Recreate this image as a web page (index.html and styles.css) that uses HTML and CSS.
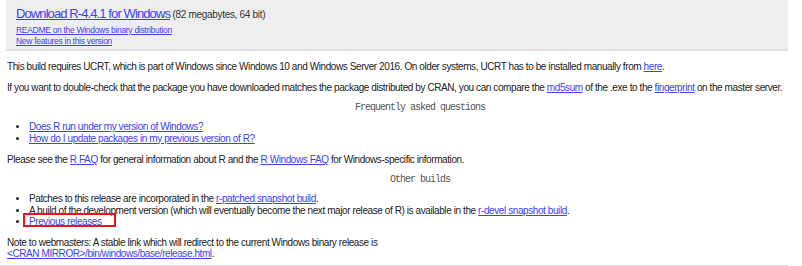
FILE: index.html
```html
<!DOCTYPE html>
<html lang="en">
<head>
    <meta charset="UTF-8">
    <meta name="viewport" content="width=device-width, initial-scale=1.0">
    <title>R-4.4.1 for Windows</title>
    <link rel="stylesheet" href="styles.css">
</head>
<body>
    <div class="page">
        <div class="download">
            <div class="download-main">
                <a class="download-link" href="#">Download R-4.4.1 for Windows</a>
                <span class="download-size">(82 megabytes, 64 bit)</span>
            </div>
            <a class="small-link" href="#">README on the Windows binary distribution</a>
            <a class="small-link" href="#">New features in this version</a>
        </div>

        <p>This build requires UCRT, which is part of Windows since Windows 10 and Windows Server 2016. On older systems, UCRT has to be installed manually from <a href="#">here</a>.</p>

        <p>If you want to double-check that the package you have downloaded matches the package distributed by CRAN, you can compare the <a href="#">md5sum</a> of the .exe to the <a href="#">fingerprint</a> on the master server.</p>

        <h2 class="section-title">Frequently asked questions</h2>

        <ul>
            <li><a href="#">Does R run under my version of Windows?</a></li>
            <li><a href="#">How do I update packages in my previous version of R?</a></li>
        </ul>

        <p>Please see the <a href="#">R FAQ</a> for general information about R and the <a href="#">R Windows FAQ</a> for Windows-specific information.</p>

        <h2 class="section-title">Other builds</h2>

        <ul>
            <li>Patches to this release are incorporated in the <a href="#">r-patched snapshot build</a>.</li>
            <li>A build of the development version (which will eventually become the next major release of R) is available in the <a href="#">r-devel snapshot build</a>.</li>
            <li class="marked"><a href="#">Previous releases</a><span class="mark-box"></span></li>
        </ul>

        <p class="note">Note to webmasters: A stable link which will redirect to the current Windows binary release is<br>
        <a href="#">&lt;CRAN MIRROR&gt;/bin/windows/base/release.html</a>.</p>

        <hr>
    </div>
</body>
</html>
```

FILE: styles.css
```css
body {
    margin: 0;
    background-color: white;
    font-family: "Liberation Sans", Arial, sans-serif;
    font-size: 10px;
    letter-spacing: -0.41px;
    line-height: 11px;
    color: #222;
}
a {
    color: #4040f0;
}
.page {
    width: 788px;
}
.download {
    margin-left: 6px;
    padding: 5px 10px 4px;
    background-color: #eeeeee;
    border-bottom: 2px solid #e2e2e2;
    height: 40px;
}
.download-main {
    line-height: 17px;
    margin-bottom: 2px;
}
.download-link {
    font-size: 13px;
    letter-spacing: -0.9px;
}
.download-size {
    color: #333;
    letter-spacing: -0.3px;
}
.small-link {
    display: block;
    font-size: 8.5px;
    letter-spacing: -0.3px;
    line-height: 11px;
}
p {
    margin: 10px 0 0 7px;
    white-space: nowrap;
}
.section-title {
    margin: 9px 0 0 52px;
    font-family: "Liberation Mono", monospace;
    font-size: 10px;
    font-weight: normal;
    letter-spacing: -1px;
    color: #555;
    text-align: center;
}
ul {
    margin: 8px 0 0 7px;
    padding-left: 22px;
}
li {
    line-height: 11.5px;
}
.marked {
    position: relative;
}
.mark-box {
    position: absolute;
    left: -6px;
    top: -3px;
    width: 89px;
    height: 10px;
    border: 2px solid #e8141e;
}
.note {
    margin-top: 9px;
}
hr {
    margin: 6px 0 0;
    border: none;
    border-top: 1px solid #ddd;
}
```
